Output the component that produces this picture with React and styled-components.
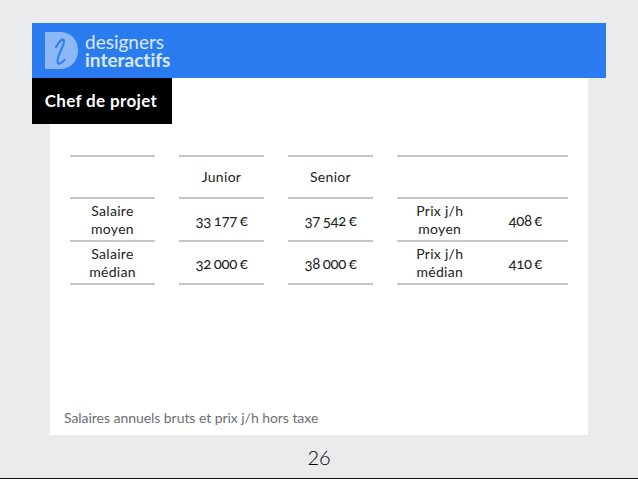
import React from 'react';
import styled, { createGlobalStyle } from 'styled-components';

const fontStack = '"Lato", "Liberation Sans", sans-serif';
const lineColor = '#c6c6c6';

const GlobalStyle = createGlobalStyle`
  html, body {
    margin: 0;
    padding: 0;
    background: #e9ebec;
  }
`;

const Page = styled.div`
  width: 638px;
  height: 479px;
  box-sizing: border-box;
  padding-top: 23px;
  border-bottom: 1px solid #111;
  font-family: ${fontStack};
  color: #222;
  overflow: hidden;
`;

const Banner = styled.header`
  margin: 0 32px;
  height: 55px;
  background: #2b7bf0;
  display: flex;
  align-items: center;
  gap: 7px;
  padding-left: 13px;
`;

const Brand = styled.div`
  display: flex;
  flex-direction: column;
  color: #d8e9fb;
  font-size: 19px;
  line-height: 18px;
  font-variant-ligatures: none;
`;

const BrandLine = styled.div`
  font-weight: ${({ $strong }) => ($strong ? 700 : 400)};
`;

const Sheet = styled.main`
  margin-left: 50px;
  width: 538px;
  height: 357px;
  background: #fff;
  display: flex;
  flex-direction: column;
`;

const Title = styled.h1`
  margin: 0 0 0 -18px;
  width: 138px;
  padding-right: 2px;
  height: 46px;
  background: #000;
  color: #fff;
  font-size: 17px;
  font-weight: 700;
  line-height: 46px;
  text-align: center;
  letter-spacing: 0.35px;
`;

const Table = styled.div`
  margin: 31px 20px 0;
`;

const Row = styled.div`
  display: grid;
  grid-template-columns: 85px 85px 85px 171px;
  column-gap: 24px;
  height: ${({ $height }) => $height}px;
`;

const Cell = styled.div`
  box-sizing: border-box;
  border-bottom: 2px solid ${lineColor};
  border-top: ${({ $first }) => ($first ? `2px solid ${lineColor}` : '0')};
  display: flex;
  align-items: center;
  justify-content: center;
  text-align: center;
  font-size: 14px;
  line-height: 18px;
  letter-spacing: 0.3px;
`;

const Pair = styled(Cell)`
  display: grid;
  grid-template-columns: 1fr 1fr;
`;

const Value = styled.span`
  font-size: 15px;
  font-feature-settings: 'onum';
  letter-spacing: -0.3px;
  word-spacing: -1px;
`;

const Footnote = styled.p`
  margin: auto 0 8px 14px;
  font-size: 14px;
  line-height: 18px;
  color: #6b6f73;
  letter-spacing: -0.05px;
`;

const PageNumber = styled.div`
  text-align: center;
  font-size: 20px;
  font-weight: 300;
  line-height: 24px;
  margin-top: 10px;
  color: #000;
`;

const Logo = () => (
  <svg width="33" height="37" viewBox="0 0 33 37" aria-hidden="true">
    <path d="M0 0H15C26 0 33 8 33 18.500S26 37 15 37H0Z" fill="#8db8f7" />
    <path
      d="M11 15C13 12 15 8 17.500 7.500C20 7.500 19 12 17 16C15 20 12.500 25 12.500 29C12.500 33 15 32.500 19.500 28"
      fill="none"
      stroke="#2b7bf0"
      strokeWidth="2"
      strokeLinecap="round"
    />
  </svg>
);

const rows = [
  { height: 42, cells: ['', 'Junior', 'Senior'], first: true },
  { height: 43, cells: [<>Salaire<br />moyen</>, '33 177 €', '37 542 €'], pair: [<>Prix j/h<br />moyen</>, '408 €'] },
  { height: 43, cells: [<>Salaire<br />médian</>, '32 000 €', '38 000 €'], pair: [<>Prix j/h<br />médian</>, '410 €'] },
];

const App = () => (
  <Page>
    <GlobalStyle />
    <Banner>
      <Logo />
      <Brand>
        <BrandLine>designers</BrandLine>
        <BrandLine $strong>interactifs</BrandLine>
      </Brand>
    </Banner>
    <Sheet>
      <Title>Chef de projet</Title>
      <Table>
        {rows.map((row, i) => (
          <Row key={i} $height={row.first ? row.height + 2 : row.height}>
            {row.cells.map((cell, j) => (
              <Cell key={j} $first={row.first}>
                {j > 0 && i > 0 ? <Value>{cell}</Value> : cell}
              </Cell>
            ))}
            <Pair $first={row.first}>
              {row.pair && <span>{row.pair[0]}</span>}
              {row.pair && <Value>{row.pair[1]}</Value>}
            </Pair>
          </Row>
        ))}
      </Table>
      <Footnote>Salaires annuels bruts et prix j/h hors taxe</Footnote>
    </Sheet>
    <PageNumber>26</PageNumber>
  </Page>
);

export default App;
